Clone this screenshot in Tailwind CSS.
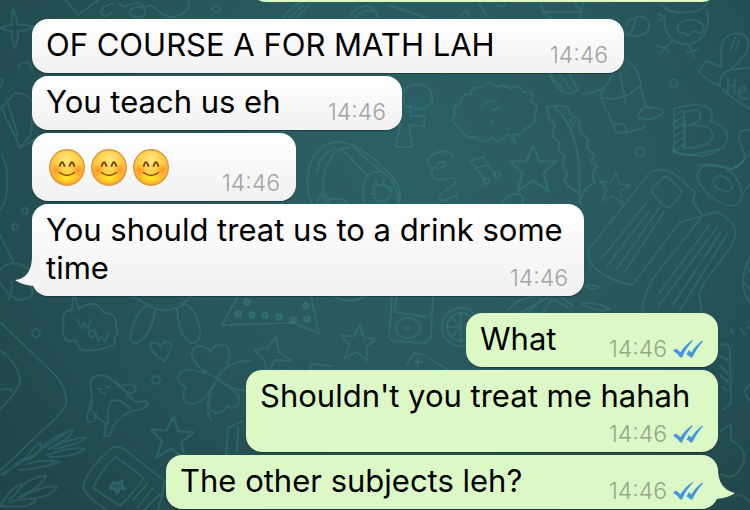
<!DOCTYPE html>
<html lang="en">
<head>
<meta charset="utf-8">
<meta name="viewport" content="width=device-width, initial-scale=1">
<title>Chat</title>
<script src="https://cdn.jsdelivr.net/npm/@tailwindcss/browser@4"></script>
</head>
<body class="font-[Inter,'Liberation_Sans',sans-serif] text-black">
<main class="relative isolate min-h-screen overflow-hidden bg-[radial-gradient(ellipse_70%_95%_at_55%_32%,#2b6164_0%,#29595c_45%,#224b4e_85%,#204548_100%)]">

  <!-- wallpaper doodles -->
  <svg class="absolute inset-0 -z-10 h-full w-full" viewBox="0 0 750 510" preserveAspectRatio="xMidYMid slice" fill="none" stroke="#3f8c8c" stroke-opacity=".32" stroke-width="2" stroke-linecap="round" stroke-linejoin="round" aria-hidden="true">
    <defs>
      <path id="star" d="M0-18 5-6 18-6 8 3 12 17 0 9-12 17-8 3-18-6-5-6Z"/>
      <circle id="dot" r="4"/>
    </defs>
    <!-- top left -->
    <path d="M13 9Q17 17 17 25 26 24 34 27 24 31 18 31 18 40 15 48 11 39 12 31 6 31 0 28 7 25 12 25 11 16 13 9Z"/>
    <path d="M66 0 78 15 99 0M101 13C102 5 111 4 113 3M101 13C103 19 110 15 112 12M120 4C128 12 135-4 143 6 150 18 139 19 133 16 125 16 131 3 143 8 156 0 158 17 172 17 184 15 190 9 189 0"/>
    <path d="M18 67C22 59 32 62 32 70M0 79C5 76 2 84 0 88M1 108 14 94C20 91 32 96 33 106L31 134 20 148 15 136ZM8 104 18 136M20 148 34 140M1 154Q9 164 7 190 4 208 0 209"/>
    <ellipse cx="216" cy="9" rx="4" ry="3"/>
    <path d="M284 17Q292 3 311 0M290 17 303 6M297 17 310 4M349 17Q357 5 368 6 377 9 377 17M355 17Q363 8 376 12M391 6 425 17M461 17Q465 4 470 17M479 4 488 17M496 5Q503 9 506 4"/>
    <path d="M540 0 543 13 551 18 M543 12H580L584 0M572 0Q584 12 580 18M626 25Q630 17 635 18 636 28 628 34M635 18Q642 13 649 22 651 35 635 36L625 35"/>
    <!-- chick -->
    <path d="M661 4Q670 15 687 12 702 12 708 2M665 16Q662 33 676 42 695 50 706 31 710 17 706 10M658 14 665 17 659 20M679 32C673 24 685 19 692 20 705 22 705 29 701 33L693 31 688 36 684 33ZM672 41 665 48M665 48 657 46M665 48 661 53M665 48 669 53M688 44 692 51M692 51 687 53M692 51 694 57M692 51 698 50"/>
    <!-- bottle -->
    <path d="M722 66Q719 52 724 39 735 29 746 37 751 46 744 56L733 68M731 50 735 37M736 50 739 40M722 67 706 61 699 72Q709 82 720 86M720 86Q719 70 736 69L750 68M720 86Q730 98 750 109M728 92V78M728 85 734 87M735 79 734 94M738 94Q747 91 744 86 738 87 738 94 743 101 748 98"/>
    <!-- sock -->
    <path d="M612 74Q608 92 583 94M604 87 600 97Q609 113 616 133 637 132 646 126M600 97Q620 104 640 86M620 73 626 103M626 60Q641 70 641 89L646 108Q661 107 663 112 656 122 639 118M637 117Q642 105 651 107M615 125Q624 121 627 131M550 74Q554 89 566 93 577 95 579 85M561 76 571 89M570 75 578 91M548 73 563 89"/>
    <circle cx="674" cy="83" r="4"/><ellipse cx="640" cy="152" rx="5" ry="4"/>
    <!-- letter B -->
    <path d="M674 109Q700 100 711 110 714 117 710 121 731 128 727 141 721 154 700 156L674 152ZM684 113Q702 104 700 120 692 125 685 126ZM685 126Q713 122 713 137 707 148 685 148ZM684 113V149M675 115 684 110M675 122 684 116M675 129 684 123M675 136 684 130M675 143 684 137M676 150 684 144M696 166Q712 162 731 169 751 164 741 146 736 133 743 130L750 130"/>
    <!-- letter F -->
    <path d="M403 96Q402 85 418 84 434 86 432 101 427 110 416 109L410 106 411 116H424V126L409 125 412 147H396L400 123M404 96Q402 110 410 106"/>
    <!-- bubble -->
    <path d="M459 126Q449 122 455 114 451 106 462 102 459 94 471 94 471 86 482 88 489 79 497 87 506 84 510 89 519 83 523 92 536 90 531 102 541 105 534 114 539 124 526 128 520 137 512 134L516 144 507 134Q500 146 492 137 481 145 476 137 463 140 459 126ZM482 106Q489 98 497 101M493 110 499 108M491 120 494 122"/>
    <!-- headphones -->
    <path d="M312 204C303 183 307 151 330 143 345 139 360 147 374 159L390 174Q403 188 399 204M325 204C320 181 324 157 342 148L349 148M317 172Q319 155 334 149M342 149 367 175M350 144 380 171M367 176Q382 164 392 182 399 193 398 204M367 176Q359 190 365 204M374 187Q372 199 380 202 393 199 390 190 385 181 374 187M375 181 378 186M384 178 383 184M393 186 389 189M371 194 375 194M317 204Q320 190 328 197V204M327 200Q342 196 349 204"/>
    <!-- squiggle, notes -->
    <path d="M453 157C451 147 427 151 428 163 431 171 447 169 446 163 442 158 431 168 432 176 436 184 451 174 455 180 458 187 440 190 439 198 444 206 456 190 457 198M471 161 483 157 496 176M471 161 486 182M476 168 488 165"/>
    <circle cx="486" cy="181" r="3"/><circle cx="497" cy="175" r="3"/>
    <use href="#star" x="0" y="0" transform="translate(533 169) scale(1.3)"/>
    <use href="#star" transform="translate(614 188) rotate(8) scale(.85)"/>
    <path d="M502 204Q507 193 519 194 525 197 522 204"/>
    <!-- feather -->
    <path d="M547 107Q556 104 567 107L571 115 578 119 581 132 588 139 587 148 595 155 591 161 597 167 592 174 595 183 586 188 580 200M547 107 549 119 555 124 552 135 560 143 558 151 565 156 562 166 568 174 564 181 570 188 578 192M554 106Q576 128 579 166L580 204M573 117 568 126M575 121 571 129"/>
    <!-- comb -->
    <path d="M650 172Q663 166 677 176L695 192 693 202 703 216M650 172 590 248Q585 261 597 270 614 283 632 285L643 271 680 222 703 216 714 212Q730 215 736 232L733 244 703 284 699 296 702 313M700 219 654 277Q643 296 642 313M651 190 664 177Q671 176 682 193L670 208Q659 205 651 190ZM646 203 602 258M649 211 607 266M659 208 617 269M664 212 624 273M710 224 660 292M718 226 658 307M721 232 672 306M727 234 680 310"/>
    <!-- fried egg -->
    <path d="M697 176Q699 163 717 166 739 170 742 195 738 213 718 201 701 192 697 176ZM713 182Q716 172 727 178 736 187 729 191 716 192 713 182M673 150Q682 159 701 153L719 149M727 171Q747 163 750 150M741 196 750 184M750 257Q739 276 745 295L750 303M747 265 750 273M745 283 750 290"/>
    <path d="M508 310Q522 293 552 296M520 313 549 297M528 313 542 299M543 313 552 299M552 299 570 308M560 296 574 307M582 304Q591 300 610 309 600 314 582 304M585 286Q593 284 599 287 592 292 585 286"/>
    <!-- left side -->
    <path d="M0 235 15 265M0 270Q11 257 29 269M0 283Q14 303 24 299 36 297 31 286M11 281Q14 288 9 299"/>
    <circle cx="15" cy="227" r="3"/><circle cx="25" cy="211" r="3"/>
    <!-- WOW cloud -->
    <path d="M73 297 72 310Q60 311 64 324 61 331 65 338 66 343 76 340 78 352 90 350 105 350 108 346 117 348 114 338 120 333 116 326 117 313 104 313 96 299 84 306 79 307 79 310L75 297M77 319 82 328 84 322 88 329 90 321M91 330Q87 333 90 337 97 337 95 331ZM97 334 98 342 101 337 105 342 109 333"/>
    <use href="#dot" x="36" y="333"/><use href="#dot" x="156" y="380"/>
    <path d="M0 322 55 375Q68 390 66 404 63 413 44 429L0 471M0 350Q20 365 20 382 17 393 0 409M0 390Q8 387 12 391"/>
    <!-- figure -->
    <path d="M131 296 147 304M191 296 183 304M147 305Q165 316 184 304M147 305Q133 316 130 338 132 348 143 339 154 327 155 310M184 304Q195 306 200 330 202 342 191 343 179 338 177 309"/>
    <path d="M164 361Q151 354 150 344 158 341 161 347 166 337 171 345 171 353 164 361ZM222 325 241 290M222 325 293 323 319 333 311 296"/>
    <g fill="#3f8c8c" fill-opacity=".3"><circle cx="238" cy="314" r="3"/><circle cx="252" cy="315" r="3"/><circle cx="265" cy="315" r="3"/><circle cx="279" cy="317" r="3"/><circle cx="293" cy="320" r="3"/><circle cx="307" cy="319" r="3"/><circle cx="247" cy="302" r="3"/><circle cx="306" cy="306" r="3"/></g>
    <!-- clover -->
    <path d="M217 378C200 371 186 356 194 348 200 343 207 347 211 352 214 343 226 343 229 350 232 361 224 371 217 378ZM217 378C205 372 184 365 179 374 176 381 180 385 186 387 180 395 184 404 192 404 204 403 212 390 217 378ZM217 378C226 366 238 360 250 361M217 378C226 386 236 390 246 391M217 378C210 392 204 409 215 413 222 413 226 409 227 406 234 411 241 405 239 397 235 389 224 385 217 378M214 386Q203 404 211 421"/>
    <!-- penguin -->
    <path d="M91 410Q93 398 90 383 92 373 106 376 118 382 128 395L136 402 147 401Q149 409 137 410 124 412 113 426 111 438 104 436L106 424Q94 415 91 410ZM108 424Q106 405 113 400 126 401 130 409M91 401 87 417Q87 425 94 421L96 413M118 386Q133 382 136 389 134 396 124 391M98 389H101M106 387H109M101 392 106 394"/>
    <use href="#star" transform="translate(172 438) rotate(4) scale(1.2)"/>
    <use href="#star" transform="translate(358 343) rotate(6)"/>
    <path d="M276 336Q278 347 279 352L292 361 275 360 267 375 264 359 254 350 268 348Z"/>
    <!-- branches -->
    <path d="M0 475Q38 453 70 430M4 475Q16 463 26 457 36 444 41 443 42 452 28 460M40 449Q54 435 73 430 72 437 52 447M49 449Q68 439 86 437 84 443 54 449M48 455Q70 446 85 449 75 457 50 457M27 464Q45 458 59 462 43 468 20 470M0 506Q12 486 22 484 20 492 8 500M16 493Q29 476 46 476 41 487 19 497M20 498Q44 484 57 487 53 497 26 499M9 502Q29 497 36 500 30 509 0 506"/>
    <!-- phone -->
    <path d="M83 487Q86 470 112 448 117 445 124 449L165 481 158 510M83 487Q83 493 106 510M93 488Q103 466 116 457L143 477Q145 481 120 506ZM133 500 147 484M138 507 153 488M144 510 160 494"/>
    <path fill="#3f8c8c" fill-opacity=".25" d="M113 482 118 483 122 480 122 485 126 489 120 489 117 494 114 489 109 489Z"/>
    <path d="M226 455 228 428 243 421M237 452 238 427M310 370 311 364 331 366"/>
    <!-- music player -->
    <path d="M392 296 389 335Q390 341 394 341L424 343Q431 341 431 335L433 296M397 296 394 312 427 317 431 312"/>
    <ellipse cx="408" cy="328" rx="12" ry="10"/><circle cx="407" cy="328" r="2"/>
    <path d="M334 296Q348 305 366 296M407 365 414 353 423 355 447 369M414 362 422 362M418 358 418 366"/>
    <!-- wheel -->
    <circle cx="461" cy="327" r="19"/><circle cx="461" cy="327" r="14"/><path d="M461 327 451 317M461 327 461 313M461 327 447 327M461 327 451 337M461 327 461 341"/>
    <!-- right edge -->
    <path d="M720 345Q731 342 730 353L731 403 724 409M720 356 728 360M721 366 728 374M721 376 728 382M722 387 728 391M720 431 731 425 731 440Q747 449 744 462 735 483 721 474M750 385Q740 390 750 401M731 329 733 333M741 329 745 335M748 327 750 329M735 496Q743 493 750 503"/>
  </svg>

  <!-- shared drawings -->
  <svg class="absolute h-0 w-0" aria-hidden="true">
    <defs>
      <radialGradient id="skin" cx=".5" cy=".3" r=".7">
        <stop offset="0" stop-color="#ffe886"/><stop offset=".45" stop-color="#ffd04a"/><stop offset=".85" stop-color="#fdb62b"/><stop offset="1" stop-color="#f5a623"/>
      </radialGradient>
      <radialGradient id="blush"><stop offset="0" stop-color="#f98424" stop-opacity=".75"/><stop offset="1" stop-color="#f98424" stop-opacity="0"/></radialGradient>
      <radialGradient id="chin"><stop offset="0" stop-color="#ffe81f"/><stop offset="1" stop-color="#ffe81f" stop-opacity="0"/></radialGradient>
      <symbol id="smile" viewBox="0 0 36 37">
        <ellipse cx="18" cy="18.5" rx="17.3" ry="17.8" fill="url(#skin)" stroke="#dd983d" stroke-width="1.4"/>
        <ellipse cx="18" cy="29" rx="11" ry="6" fill="url(#chin)"/>
        <circle cx="7" cy="21" r="6.5" fill="url(#blush)"/><circle cx="29" cy="21" r="6.5" fill="url(#blush)"/>
        <path d="M10.8 17Q13 9.5 15.4 17M20.6 17Q23 9.5 25.2 17" fill="none" stroke="#7d4a08" stroke-width="2" stroke-linecap="round"/>
        <path d="M10.5 23.5Q18 29.5 25.5 23.5" fill="none" stroke="#8a4b08" stroke-width="1.5" stroke-linecap="round"/>
      </symbol>
      <symbol id="read" viewBox="0 0 30 18">
        <path d="M0 10.5 3 8.5 7.5 12.2Q12 5 19.5 0L20 .8Q13 8 9 17.5H7.2Q4 13 0 10.5ZM13.5 14.5 16 10 18.3 12.4Q23 5 29.5 .6L30 1.4Q23 9 19.3 17.5H17.5Q16 15.5 13.5 14.5Z" fill="#4596e0"/>
      </symbol>
    </defs>
  </svg>

  <div class="flex flex-col gap-[17px] px-8">
    <div class="-mt-[52px] h-[54px] w-[468px] max-w-full self-end rounded-2xl bg-[#dcf8c6]" aria-hidden="true"></div>

    <section class="flex flex-col items-start gap-[3px]" aria-label="Received messages">
      <article class="flex w-[592px] max-w-full items-end justify-between rounded-2xl bg-linear-to-b from-white to-[#f1f1f2] pt-[7px] pr-4 pb-[9px] pl-[14px] shadow-[0_1px_1px_#0005]">
        <p class="text-[31px] leading-[38px]">OF COURSE A FOR MATH LAH</p>
        <time class="-mb-[3px] shrink-0 text-[23px] leading-6 font-light text-[#a3a3a5]">14:46</time>
      </article>
      <article class="flex w-[370px] max-w-full items-end justify-between rounded-2xl bg-linear-to-b from-white to-[#f1f1f2] pt-[7px] pr-4 pb-[9px] pl-[14px] shadow-[0_1px_1px_#0005]">
        <p class="text-[31px] leading-[38px]">You teach us eh</p>
        <time class="-mb-[3px] shrink-0 text-[23px] leading-6 font-light text-[#a3a3a5]">14:46</time>
      </article>
      <article class="flex w-[264px] max-w-full items-end justify-between rounded-2xl bg-linear-to-b from-white to-[#f1f1f2] pt-4 pr-4 pb-[9px] pl-[17px] shadow-[0_1px_1px_#0005]">
        <p class="flex gap-[6px] pb-[6px]" role="img" aria-label="😊😊😊">
          <svg class="h-[37px] w-9"><use href="#smile"/></svg>
          <svg class="h-[37px] w-9"><use href="#smile"/></svg>
          <svg class="h-[37px] w-9"><use href="#smile"/></svg>
        </p>
        <time class="-mb-[3px] shrink-0 text-[23px] leading-6 font-light text-[#a3a3a5]">14:46</time>
      </article>
      <article class="relative w-[552px] max-w-full rounded-2xl bg-linear-to-b from-white to-[#f1f1f2] pt-[7px] pr-4 pb-[9px] pl-[14px] shadow-[0_1px_1px_#0005]">
        <svg class="absolute bottom-2 -left-[17px] h-8 w-6" viewBox="0 0 24 32" aria-hidden="true"><path d="M17 0Q17 22 0 24 6 29 19 30L24 32V0Z" fill="#f5f5f6"/></svg>
        <div class="relative text-[31px] leading-[38px]">You should treat us to a drink some time
          <time class="float-right mt-[17px] -mb-[3px] text-[23px] leading-6 font-light text-[#a3a3a5]">14:46</time>
        </div>
      </article>
    </section>

    <section class="flex flex-col items-end gap-[3px]" aria-label="Sent messages">
      <article class="flex w-[252px] max-w-full items-end justify-between rounded-2xl bg-[#dcf8c6] pt-[7px] pr-[15px] pb-[9px] pl-[14px] shadow-[0_1px_1px_#0005]">
        <p class="text-[31px] leading-[38px]">What</p>
        <div class="-mb-[3px] flex shrink-0 items-center gap-[6px]">
          <time class="text-[23px] leading-6 font-light text-[#93a986]">14:46</time>
          <svg class="h-[18px] w-[30px]" role="img" aria-label="Read"><use href="#read"/></svg>
        </div>
      </article>
      <article class="flex w-[472px] max-w-full flex-col rounded-2xl bg-[#dcf8c6] pt-[7px] pr-[15px] pb-[6px] pl-[14px] shadow-[0_1px_1px_#0005]">
        <p class="text-[31px] leading-[38px]">Shouldn't you treat me hahah</p>
        <div class="mt-[7px] flex items-center gap-[6px] self-end">
          <time class="text-[23px] leading-6 font-light text-[#93a986]">14:46</time>
          <svg class="h-[18px] w-[30px]" role="img" aria-label="Read"><use href="#read"/></svg>
        </div>
      </article>
      <article class="relative flex w-[552px] max-w-full items-end justify-between rounded-2xl bg-[#dcf8c6] pt-[7px] pr-[15px] pb-[9px] pl-[14px] shadow-[0_1px_1px_#0005]">
        <svg class="absolute -right-[17px] bottom-2 h-8 w-6" viewBox="0 0 24 32" aria-hidden="true"><path d="M7 0Q7 20 24 24 18 29 5 30L0 32V0Z" fill="#dcf8c6"/></svg>
        <p class="text-[31px] leading-[38px]">The other subjects leh?</p>
        <div class="relative -mb-[3px] flex shrink-0 items-center gap-[6px]">
          <time class="text-[23px] leading-6 font-light text-[#93a986]">14:46</time>
          <svg class="h-[18px] w-[30px]" role="img" aria-label="Read"><use href="#read"/></svg>
        </div>
      </article>
    </section>
  </div>
</main>
</body>
</html>
